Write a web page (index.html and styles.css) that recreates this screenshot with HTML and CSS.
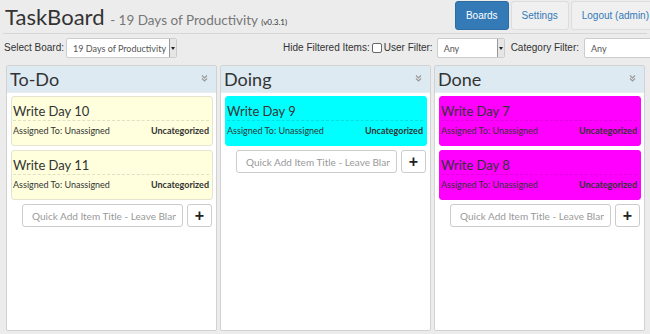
FILE: index.html
```html
<!DOCTYPE html>
<html lang="en">
<head>
    <meta charset="UTF-8">
    <meta name="viewport" content="width=device-width, initial-scale=1.0">
    <title>TaskBoard</title>
    <link rel="stylesheet" href="styles.css">
</head>
<body>
    <div class="header">
        <h1>TaskBoard <small>- 19 Days of Productivity <span class="version">(v0.3.1)</span></small></h1>
        <div class="nav">
            <a class="nav-btn active">Boards</a>
            <a class="nav-btn">Settings</a>
            <a class="nav-btn">Logout (admin)</a>
        </div>
    </div>
    <div class="toolbar">
        <label>Select Board:</label>
        <div class="select board-select">19 Days of Productivity<span class="arrow"></span></div>
        <div class="spacer"></div>
        <label>Hide Filtered Items:</label>
        <span class="checkbox"></span>
        <label>User Filter:</label>
        <div class="select user-select">Any<span class="arrow"></span></div>
        <label class="cat-label">Category Filter:</label>
        <div class="select cat-select">Any</div>
    </div>
    <div class="lanes">
        <div class="lane">
            <div class="lane-head">To-Do
                <svg class="collapse" width="7" height="8" viewBox="0 0 7 8"><path d="M1 1.5l2.5 2.5 2.5-2.5M1 4.5l2.5 2.5 2.5-2.5" fill="none" stroke="#999" stroke-width="1.2"/></svg>
            </div>
            <div class="card yellow">
                <div class="card-title">Write Day 10</div>
                <div class="card-meta"><span>Assigned To: Unassigned</span><b>Uncategorized</b></div>
            </div>
            <div class="card yellow">
                <div class="card-title">Write Day 11</div>
                <div class="card-meta"><span>Assigned To: Unassigned</span><b>Uncategorized</b></div>
            </div>
            <div class="quick-add">
                <input type="text" placeholder="Quick Add Item Title - Leave Blank for Full Details">
                <button>+</button>
            </div>
        </div>
        <div class="lane">
            <div class="lane-head">Doing
                <svg class="collapse" width="7" height="8" viewBox="0 0 7 8"><path d="M1 1.5l2.5 2.5 2.5-2.5M1 4.5l2.5 2.5 2.5-2.5" fill="none" stroke="#999" stroke-width="1.2"/></svg>
            </div>
            <div class="card cyan">
                <div class="card-title">Write Day 9</div>
                <div class="card-meta"><span>Assigned To: Unassigned</span><b>Uncategorized</b></div>
            </div>
            <div class="quick-add">
                <input type="text" placeholder="Quick Add Item Title - Leave Blank for Full Details">
                <button>+</button>
            </div>
        </div>
        <div class="lane">
            <div class="lane-head">Done
                <svg class="collapse" width="7" height="8" viewBox="0 0 7 8"><path d="M1 1.5l2.5 2.5 2.5-2.5M1 4.5l2.5 2.5 2.5-2.5" fill="none" stroke="#999" stroke-width="1.2"/></svg>
            </div>
            <div class="card magenta">
                <div class="card-title">Write Day 7</div>
                <div class="card-meta"><span>Assigned To: Unassigned</span><b>Uncategorized</b></div>
            </div>
            <div class="card magenta">
                <div class="card-title">Write Day 8</div>
                <div class="card-meta"><span>Assigned To: Unassigned</span><b>Uncategorized</b></div>
            </div>
            <div class="quick-add">
                <input type="text" placeholder="Quick Add Item Title - Leave Blank for Full Details">
                <button>+</button>
            </div>
        </div>
    </div>
</body>
</html>
```

FILE: styles.css
```css
body {
    margin: 0;
    background: #ececec;
    font-family: Lato, "Open Sans", sans-serif;
    color: #333;
    overflow: hidden;
    width: 650px;
    height: 334px;
}
.header {
    display: flex;
    align-items: flex-start;
    height: 33px;
    border-bottom: 1px solid #d6d6d6;
    margin: 0 3px 0 3px;
    white-space: nowrap;
}
h1 {
    margin: 3px 0 0 2px;
    font-size: 22px;
    font-weight: normal;
    color: #333;
    flex: 1;
}
h1 small {
    font-size: 13.5px;
    color: #777;
}
h1 .version {
    font-size: 8px;
    color: #333;
}
.nav {
    display: flex;
    flex-shrink: 0;
    gap: 2px;
    margin-top: 1px;
    margin-right: -13px;
}
.nav-btn {
    font-family: "Liberation Sans", Arial, sans-serif;
    font-size: 10px;
    color: #337ab7;
    background: #f0f0f0;
    border: 1px solid #ddd;
    border-radius: 3px;
    height: 27px;
    line-height: 27px;
    padding: 0 10px;
}
.nav-btn.active {
    background: #337ab7;
    border-color: #2e6da4;
    color: white;
}
.toolbar {
    display: flex;
    align-items: center;
    height: 27px;
    padding-left: 4px;
    margin-right: -14px;
    white-space: nowrap;
    font-family: "Liberation Sans", Arial, sans-serif;
    font-size: 10px;
    color: #333;
}
.toolbar > * {
    flex-shrink: 0;
}
.toolbar label {
    margin-right: 2px;
}
.toolbar .spacer {
    flex: 1;
    flex-shrink: 1;
}
.select {
    position: relative;
    box-sizing: border-box;
    height: 20px;
    line-height: 19px;
    background: white;
    border: 1px solid #ccc;
    border-radius: 2px;
    font-family: Lato, "Open Sans", sans-serif;
    font-size: 9px;
    color: #555;
    padding-left: 6px;
    overflow: hidden;
}
.select .arrow {
    position: absolute;
    right: 0;
    top: 0;
    width: 6px;
    height: 18px;
    background: #e6e6e6;
    border-left: 1px solid #999;
}
.select .arrow::after {
    content: "";
    position: absolute;
    left: 1px;
    top: 8px;
    border: 2px solid transparent;
    border-top: 3px solid #222;
}
.board-select {
    width: 111px;
}
.user-select {
    width: 68px;
    margin-right: 6px;
    margin-left: 2px;
}
.cat-label {
    margin-right: 5px !important;
}
.cat-select {
    width: 80px;
}
.checkbox {
    box-sizing: border-box;
    width: 10px;
    height: 10px;
    border: 1px solid #666;
    border-radius: 2px;
    background: white;
    margin-right: 2px;
}
.lanes {
    display: grid;
    grid-template-columns: repeat(3, 211px);
    gap: 3px;
    padding: 4px 0 0 6px;
}
.lane {
    box-sizing: border-box;
    height: 266px;
    background: white;
    border: 1px solid #d2d2d2;
    border-radius: 2px;
    padding: 0 3px 0 4px;
}
.lane-head {
    position: relative;
    margin: 0 -3px 3px -4px;
    height: 26px;
    line-height: 27px;
    background: #deeaf2;
    padding-left: 3px;
    font-size: 18px;
    color: #333;
    border-bottom: 1px solid #e8eef2;
}
.collapse {
    position: absolute;
    right: 8px;
    top: 8px;
}
.card {
    box-sizing: border-box;
    height: 50px;
    margin-bottom: 4px;
    border: 1px solid #e4e4d0;
    border-radius: 3px;
    padding: 0 3px 0 1px;
}
.card.yellow {
    background: #ffffdd;
}
.card.cyan {
    background: #00ffff;
    border-color: #00ffff;
}
.card.magenta {
    background: #ff00ff;
    border-color: #ff00ff;
}
.card-title {
    height: 23px;
    line-height: 28px;
    font-size: 13px;
    border-bottom: 1px dashed rgba(0, 0, 0, 0.12);
}
.card-meta {
    display: flex;
    justify-content: space-between;
    line-height: 20px;
    font-size: 9px;
}
.card-meta b {
    font-weight: bold;
}
.quick-add {
    display: flex;
    justify-content: flex-end;
    gap: 4px;
    margin-right: 1px;
}
.quick-add input {
    box-sizing: border-box;
    width: 161px;
    height: 23px;
    border: 1px solid #ccc;
    border-radius: 3px;
    padding: 0 6px 0 9px;
    font-family: Lato, "Open Sans", sans-serif;
    font-size: 10px;
}
.quick-add input::placeholder {
    color: #999;
}
.quick-add button {
    box-sizing: border-box;
    width: 25px;
    height: 23px;
    background: white;
    border: 1px solid #ccc;
    border-radius: 3px;
    font-size: 16px;
    font-weight: bold;
    line-height: 16px;
    padding: 0;
    color: #222;
}
```
